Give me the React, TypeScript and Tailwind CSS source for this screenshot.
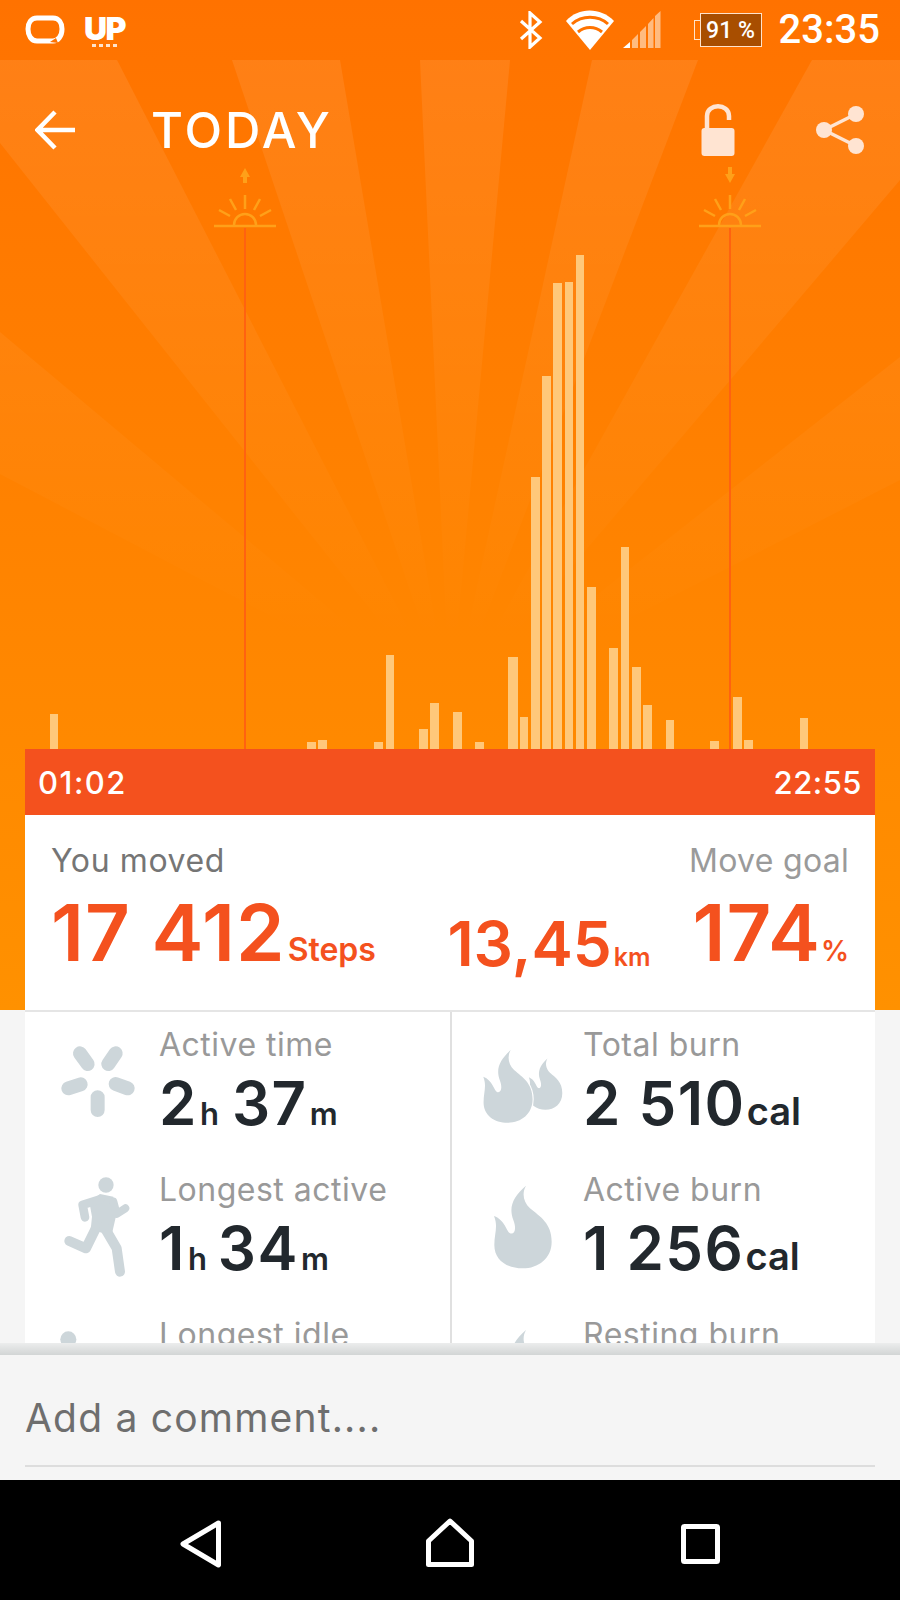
import React from "react";

const bars: [number, number, number][] = [
  [50, 8, 714], [307, 9, 742], [318, 9, 740], [374, 9, 742], [386, 8, 655], [419, 9, 729], [430, 9, 703],
  [453, 9, 712], [475, 9, 742], [508, 10, 657], [520, 8, 717], [531, 9, 477], [542, 9, 376], [553, 9, 283],
  [565, 8, 282], [576, 8, 255], [587, 9, 587], [609, 9, 648], [621, 8, 547], [632, 9, 667], [643, 9, 705],
  [666, 8, 720], [710, 9, 741], [733, 9, 697], [744, 9, 740], [800, 8, 718],
];

function Sun({ x, up }: { x: number; up: boolean }) {
  return (
    <g stroke="#ffa019" fill="none">
      <path d={`M${x - 31} 226 H${x + 31}`} strokeWidth="2.500" />
      <path d={`M${x - 11} 225 A11 11 0 0 1 ${x + 11} 225`} strokeWidth="2.500" />
      <path
        d={`M${x} 195 V209 M${x - 15} 199 L${x - 9} 210 M${x + 15} 199 L${x + 9} 210 M${x - 26} 210 L${x - 15} 216 M${x + 26} 210 L${x + 15} 216`}
        strokeWidth="2.500"
      />
      {up ? (
        <path d={`M${x} 168 L${x + 5} 177 H${x + 2} V183 H${x - 2} V177 H${x - 5} Z`} fill="#ffa019" stroke="none" />
      ) : (
        <path d={`M${x} 183 L${x + 5} 174 H${x + 2} V167 H${x - 2} V174 H${x - 5} Z`} fill="#ffa019" stroke="none" />
      )}
      <path d={`M${x} 228 V749`} stroke="#ff6210" strokeWidth="2" />
    </g>
  );
}

function Hero() {
  return (
    <svg className="absolute left-0 top-0 w-[900px] h-[1010px]" viewBox="0 0 900 1010">
      <defs>
        <linearGradient id="ray" gradientUnits="userSpaceOnUse" x1="0" y1="60" x2="0" y2="640">
          <stop offset="0" stopColor="#fff" stopOpacity="0.085" />
          <stop offset="0.5" stopColor="#fff" stopOpacity="0.045" />
          <stop offset="1" stopColor="#fff" stopOpacity="0" />
        </linearGradient>
      </defs>
      <polygon points="450,710 117,60 0,60 0,143" fill="url(#ray)" />
      <polygon points="450,710 232,60 340,60" fill="url(#ray)" />
      <polygon points="450,710 420,60 510,60" fill="url(#ray)" />
      <polygon points="450,710 592,60 698,60" fill="url(#ray)" />
      <polygon points="450,710 812,60 900,60 900,180" fill="url(#ray)" />
      <polygon points="450,710 0,332 0,474" fill="url(#ray)" />
      <polygon points="450,710 900,357 900,480" fill="url(#ray)" />
      {bars.map(([x, w, t]) => (
        <rect key={x} x={x} y={t} width={w} height={749 - t} fill="#ffc87a" />
      ))}
      <Sun x={245} up />
      <Sun x={730} up={false} />
    </svg>
  );
}

function StatusBar() {
  return (
    <div className="relative flex items-center h-[60px] pl-[25px] pr-[20px] text-white">
      <svg width="40" height="30" viewBox="0 0 40 30" className="mr-[19px]">
        <path
          d="M12 3 H28 C34 3 37 8 37 14 C37 21 33 26 28 26 L12 26 C6 26 3 20 3 14 C3 8 6 3 12 3 Z"
          fill="none"
          stroke="#fff"
          strokeWidth="5"
        />
        <path d="M25 27 L31 23 L33 28 Z" fill="#ff7300" />
      </svg>
      <div className="flex flex-col items-center mt-[3px]">
        <span className="font-['Inter',sans-serif] font-black text-[32px] leading-[25px] tracking-[-1.5px]">UP</span>
        <div className="flex gap-[3px] mt-[3px]">
          <i className="w-[4px] h-[3px] bg-[#ffe3cc]" />
          <i className="w-[4px] h-[3px] bg-[#ffe3cc]" />
          <i className="w-[4px] h-[3px] bg-[#ffe3cc]" />
          <i className="w-[4px] h-[3px] bg-[#ffe3cc]" />
        </div>
      </div>
      <div className="ml-auto flex items-center">
        <svg width="24" height="38" viewBox="0 0 24 38">
          <path d="M2 10 L21 27 L11 36 V2 L21 11 L2 28" fill="none" stroke="#fff" strokeWidth="3.200" />
        </svg>
        <svg width="50" height="42" viewBox="0 0 50 42" className="ml-[22px]">
          <path d="M1 12 C13 -2 36 -2 49 12 L25 41 Z" fill="#fff" />
          <path d="M7 15 C17 6 33 6 43 15 M13 23 C20 17 30 17 37 23" fill="none" stroke="#ff7300" strokeWidth="3" />
        </svg>
        <svg width="38" height="38" viewBox="0 0 38 38" className="ml-[8px]">
          <path d="M0 37 L7 31 V37 Z" fill="#fff" />
          <path d="M9 37 V29 L15 23 V37 Z M17 37 V21 L23 15 V37 Z M25 37 V13 L30.500 7 V37 Z M32 37 V5 L37.500 0 V37 Z" fill="#ffbb80" />
        </svg>
        <div className="relative ml-[33px] flex items-center">
          <div className="w-[6px] h-[20px] border border-r-0 border-[#ffe3cc]" />
          <div className="flex items-center justify-center w-[62px] h-[34px] bg-[#a84e00] border border-[#ffe3cc] font-['Roboto',sans-serif] font-medium text-[23px] leading-none whitespace-nowrap">
            91 %
          </div>
        </div>
        <span className="ml-[17px] font-['Roboto',sans-serif] font-medium text-[40px] leading-none">23:35</span>
      </div>
    </div>
  );
}

function Header() {
  return (
    <div className="relative flex items-center h-[80px] mt-[30px] pl-[35px] pr-[36px] text-white">
      <svg width="40" height="40" viewBox="0 0 40 40">
        <path d="M2 20 H40 M20 2 L2.500 20 L20 38" fill="none" stroke="#fff" strokeWidth="4.500" />
      </svg>
      <span className="ml-[76px] font-['Inter',sans-serif] font-medium text-[49px] leading-none tracking-[3px]">TODAY</span>
      <div className="ml-auto flex items-center">
        <svg width="34" height="52" viewBox="0 0 34 52">
          <path d="M6 24 V12 C6 -1 28 -1 28 12 V16" fill="none" stroke="#ffe4d2" strokeWidth="4.500" />
          <rect x="0.500" y="24" width="33" height="28" rx="3" fill="#ffe4d2" />
        </svg>
        <svg width="48" height="48" viewBox="0 0 48 48" className="ml-[81px]">
          <path d="M8 24 L40 8 M8 24 L40 40" stroke="#ffe4d2" strokeWidth="3.500" />
          <circle cx="8" cy="24" r="8" fill="#ffe4d2" />
          <circle cx="40" cy="8" r="8" fill="#ffe4d2" />
          <circle cx="40" cy="40" r="8" fill="#ffe4d2" />
        </svg>
      </div>
    </div>
  );
}

function Summary() {
  return (
    <div className="relative mt-auto mx-[25px] h-[261px] font-['Inter',sans-serif]">
      <div className="flex items-center justify-between h-[66px] pl-[13px] pr-[13px] bg-[#f4511e] text-white font-medium text-[31px] leading-none">
        <span className="tracking-[1.5px]">01:02</span>
        <span className="tracking-[0.5px]">22:55</span>
      </div>
      <div className="h-[195px] bg-white px-[26px] pt-[28px]">
        <div className="flex justify-between text-[32px] leading-[36px]">
          <span className="text-[#757575] tracking-[0.6px]">You moved</span>
          <span className="text-[#9a9a9a] tracking-[0.3px]">Move goal</span>
        </div>
        <div className="relative flex items-baseline mt-[14px] text-[#f4511e] font-semibold leading-[80px]">
          <span className="text-[78px] tracking-[1px]">17 412</span>
          <span className="ml-[2px] text-[32px]">Steps</span>
          <span className="ml-auto text-[62px] relative top-[5px]">13,45</span>
          <span className="ml-[2px] text-[25px] relative top-[5px]">km</span>
          <span className="ml-[42px] text-[78px] tracking-[1px]">174</span>
          <span className="text-[28px]">%</span>
        </div>
      </div>
    </div>
  );
}

const flame =
  "M228 557 C190 590 175 620 190 660 C200 685 195 705 180 700 C170 695 165 660 132 648 C145 680 133 700 133 735 C133 780 170 805 218 805 C265 805 305 775 305 725 C305 670 270 650 240 625 C220 605 215 580 228 557 Z";

function Row({
  box,
  icon,
  label,
  value,
}: {
  box: string;
  icon: React.ReactNode;
  label: string;
  value?: React.ReactNode;
}) {
  return (
    <div className="flex h-[145px] shrink-0">
      <svg viewBox={box} className="w-[131px] h-[145px] shrink-0">
        {icon}
      </svg>
      <div className="pt-[13px]">
        <div className="text-[#999] text-[32px] leading-[40px] tracking-[0.5px] whitespace-nowrap">{label}</div>
        {value && (
          <div className="flex items-baseline mt-[6px] text-[#22282d] font-semibold leading-[64px] whitespace-nowrap">{value}</div>
        )}
      </div>
    </div>
  );
}

const Big = ({ children, className = "" }: { children: React.ReactNode; className?: string }) => (
  <span className={`text-[60px] tracking-[1.5px] ${className}`}>{children}</span>
);
const Small = ({ children, className = "" }: { children: React.ReactNode; className?: string }) => (
  <span className={`text-[31px] ${className}`}>{children}</span>
);

function Stats() {
  const L = "translate(0 1000) scale(0.3333)";
  const R = "translate(450 1000) scale(0.3333)";
  return (
    <div className="relative flex-1 min-h-0 mx-[25px] bg-white border-t-2 border-[#e5e5e5] grid grid-cols-[427px_1fr] overflow-hidden font-['Inter',sans-serif]">
      <div className="pl-[3px] border-r-2 border-[#e0e0e0]">
        <Row
          box="28 1012 131 145"
          label="Active time"
          value={
            <>
              <Big>2</Big>
              <Small className="ml-[2px]">h</Small>
              <Big className="ml-[13px]">37</Big>
              <Small className="ml-[2px]">m</Small>
            </>
          }
          icon={
            <g transform={L} fill="none" stroke="#cdd6da" strokeWidth="42" strokeLinecap="round">
              <path d="M240 160 L263 192 M347 160 L325 192 M205 265 L242 253 M347 252 L383 265 M293 292 V330" />
            </g>
          }
        />
        <Row
          box="28 1157 131 145"
          label="Longest active"
          value={
            <>
              <Big>1</Big>
              <Small className="ml-[2px]">h</Small>
              <Big className="ml-[11px]">34</Big>
              <Small className="ml-[2px]">m</Small>
            </>
          }
          icon={
            <g transform={L} fill="none" stroke="#cdd6da" strokeLinecap="round" strokeLinejoin="round">
              <circle cx="318" cy="555" r="23" fill="#cdd6da" stroke="none" />
              <polygon points="268,606 300,582 340,590 350,640 335,705 272,690 276,650" fill="#cdd6da" stroke="none" />
              <path d="M300 598 L248 615 L255 652" strokeWidth="26" />
              <path d="M340 605 L350 642 L376 625" strokeWidth="24" />
              <path d="M290 680 L258 745 L208 723" strokeWidth="30" />
              <path d="M312 680 L350 745 L360 815" strokeWidth="30" />
            </g>
          }
        />
        <Row
          box="28 1302 131 145"
          label="Longest idle"
          icon={
            <g transform={L}>
              <circle cx="205" cy="1018" r="24" fill="#cdd6da" />
            </g>
          }
        />
      </div>
      <div>
        <Row
          box="452 1012 131 145"
          label="Total burn"
          value={
            <>
              <Big>2 510</Big>
              <Small className="ml-[1px] text-[38px]">cal</Small>
            </>
          }
          icon={
            <g transform={R}>
              <path d={flame} fill="#cdd6da" transform="translate(160 -170) scale(0.58 0.62)" />
              <path d={flame} fill="#cdd6da" stroke="#fff" strokeWidth="8" paintOrder="stroke" transform="translate(-13 -340) scale(0.855 0.88)" />
            </g>
          }
        />
        <Row
          box="452 1157 131 145"
          label="Active burn"
          value={
            <>
              <Big>1 256</Big>
              <Small className="ml-[1px] text-[38px]">cal</Small>
            </>
          }
          icon={
            <g transform={R}>
              <path d={flame} fill="#cdd6da" />
            </g>
          }
        />
        <Row
          box="452 1302 131 145"
          label="Resting burn"
          icon={
            <g transform={R}>
              <path d={flame} fill="#cdd6da" transform="translate(0 433)" />
            </g>
          }
        />
      </div>
    </div>
  );
}

function Comment() {
  return (
    <div className="h-[137px] shrink-0 bg-[#f5f5f5] font-['Inter',sans-serif]">
      <div className="h-[12px] bg-gradient-to-b from-[#eceded] to-[#d2d5d5]" />
      <div className="mx-[25px] h-[112px] border-b-2 border-[#dddddd] pt-[38px] text-[#6e6e6e] text-[39px] leading-[50px] tracking-[1.2px]">
        Add a comment....
      </div>
    </div>
  );
}

function Nav() {
  return (
    <div className="flex h-[120px] shrink-0 bg-black relative">
      <svg width="900" height="120" viewBox="0 1480 900 120">
        <path d="M218.500 1523 L183 1544 L218.500 1565 Z" fill="none" stroke="#fff" strokeWidth="5" strokeLinejoin="round" />
        <path d="M450 1521 L428.500 1541 V1564.500 H471.500 V1541 Z" fill="none" stroke="#fff" strokeWidth="5" strokeLinejoin="round" />
        <rect x="683.500" y="1526.500" width="34" height="35" fill="none" stroke="#fff" strokeWidth="5" rx="1" />
      </svg>
    </div>
  );
}

export default function App() {
  return (
    <div className="w-[900px] h-[1600px] flex flex-col overflow-hidden bg-[#f5f5f5]">
      <div className="relative flex flex-col h-[1010px] shrink-0 bg-gradient-to-b from-[#ff7200] to-[#ff9100]">
        <Hero />
        <StatusBar />
        <Header />
        <Summary />
      </div>
      <Stats />
      <Comment />
      <Nav />
    </div>
  );
}
